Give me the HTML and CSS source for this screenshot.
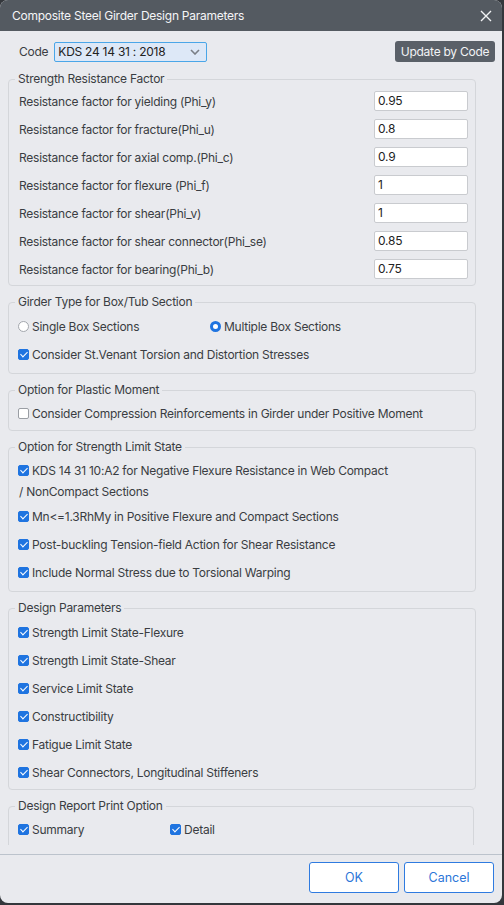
FILE: index.html
```html
<!DOCTYPE html>
<html>
<head>
<meta charset="utf-8">
<link rel="stylesheet" href="styles.css">
</head>
<body>
<div class="dialog">
  <div class="titlebar">
    <span class="title">Composite Steel Girder Design Parameters</span>
    <svg class="close" width="12" height="12" viewBox="0 0 12 12"><path d="M1 1L11 11M11 1L1 11" stroke="#f2f3f5" stroke-width="1.4" fill="none"/></svg>
  </div>
  <div class="coderow">
    <span class="codelabel">Code</span>
    <div class="select">
      <span>KDS 24 14 31 : 2018</span>
      <svg width="10" height="6" viewBox="0 0 10 6"><path d="M1 1L5 5L9 1" stroke="#7a7f86" stroke-width="1.6" fill="none"/></svg>
    </div>
    <div class="spacer"></div>
    <button class="btn-dark">Update by Code</button>
  </div>
  <div class="scroll">
    <fieldset class="group g1">
      <legend>Strength Resistance Factor</legend>
      <div class="frow"><span>Resistance factor for yielding (Phi_y)</span><div class="input">0.95</div></div>
      <div class="frow"><span>Resistance factor for fracture(Phi_u)</span><div class="input">0.8</div></div>
      <div class="frow"><span>Resistance factor for axial comp.(Phi_c)</span><div class="input">0.9</div></div>
      <div class="frow"><span>Resistance factor for flexure (Phi_f)</span><div class="input">1</div></div>
      <div class="frow"><span>Resistance factor for shear(Phi_v)</span><div class="input">1</div></div>
      <div class="frow"><span>Resistance factor for shear connector(Phi_se)</span><div class="input">0.85</div></div>
      <div class="frow"><span>Resistance factor for bearing(Phi_b)</span><div class="input">0.75</div></div>
    </fieldset>
    <fieldset class="group g2">
      <legend>Girder Type for Box/Tub Section</legend>
      <div class="row two">
        <div class="opt"><span class="radio"></span>Single Box Sections</div>
        <div class="opt opt-right"><span class="radio on"></span>Multiple Box Sections</div>
      </div>
      <div class="row"><span class="cb on"></span>Consider St.Venant Torsion and Distortion Stresses</div>
    </fieldset>
    <fieldset class="group g3">
      <legend>Option for Plastic Moment</legend>
      <div class="row"><span class="cb"></span>Consider Compression Reinforcements in Girder under Positive Moment</div>
    </fieldset>
    <fieldset class="group g4">
      <legend>Option for Strength Limit State</legend>
      <div class="row multi"><div class="line"><span class="cb on"></span>KDS 14 31 10:A2 for Negative Flexure Resistance in Web Compact</div><div class="line cont">/ NonCompact Sections</div></div>
      <div class="row"><span class="cb on"></span>Mn&lt;=1.3RhMy in Positive Flexure and Compact Sections</div>
      <div class="row"><span class="cb on"></span>Post-buckling Tension-field Action for Shear Resistance</div>
      <div class="row"><span class="cb on"></span>Include Normal Stress due to Torsional Warping</div>
    </fieldset>
    <fieldset class="group g5">
      <legend>Design Parameters</legend>
      <div class="row"><span class="cb on"></span>Strength Limit State-Flexure</div>
      <div class="row"><span class="cb on"></span>Strength Limit State-Shear</div>
      <div class="row"><span class="cb on"></span>Service Limit State</div>
      <div class="row"><span class="cb on"></span>Constructibility</div>
      <div class="row"><span class="cb on"></span>Fatigue Limit State</div>
      <div class="row"><span class="cb on"></span>Shear Connectors, Longitudinal Stiffeners</div>
    </fieldset>
    <fieldset class="group g6">
      <legend>Design Report Print Option</legend>
      <div class="row two">
        <div class="opt"><span class="cb on"></span>Summary</div>
        <div class="opt opt-detail"><span class="cb on"></span>Detail</div>
      </div>
      <div class="row"></div>
    </fieldset>
  </div>
  <div class="footer">
    <button class="btn-outline">OK</button>
    <button class="btn-outline">Cancel</button>
  </div>
</div>
</body>
</html>
```
FILE: styles.css
```css
html, body { margin: 0; padding: 0; }
body {
  background: #34373c;
  width: 504px;
  height: 905px;
  overflow: hidden;
  font-family: Inter, "Noto Sans", sans-serif;
  font-size: 12px;
  letter-spacing: -0.25px;
  color: #3a3d42;
}
.dialog {
  width: 502px;
  height: 903px;
  background: #e9eaee;
  border-radius: 8px;
  overflow: hidden;
  display: flex;
  flex-direction: column;
}
.titlebar {
  height: 31px;
  background: #545a61;
  display: flex;
  align-items: center;
  padding: 0 10px 0 12px;
  flex: none;
}
.title { color: #f4f5f7; font-size: 12px; flex: 1; }
.coderow {
  display: flex;
  align-items: center;
  padding: 10px 7px 0 19px;
  height: 21px;
  flex: none;
}
.codelabel { margin-right: 6px; color: #3a3d42; }
.select {
  height: 18px;
  border: 1px solid #4aa6e8;
  border-radius: 2px;
  background: #dde8f7;
  display: flex;
  align-items: center;
  justify-content: space-between;
  padding: 0 6px 0 3px;
  box-sizing: content-box;
  width: 142px;
  color: #222;
}
.spacer { flex: 1; }
.btn-dark {
  font-family: inherit;
  font-size: 12px;
  letter-spacing: -0.25px;
  background: #5a6068;
  color: #f2f3f5;
  border: none;
  border-radius: 3px;
  height: 21px;
  width: 100px;
  padding: 0;
}
.scroll {
  flex: none;
  height: 773px;
  margin-top: 10px;
  overflow: hidden;
  padding: 0 26px 0 8px;
}
.group {
  margin: 0 0 9px 0;
  padding: 0 7px 4px 9px;
  border: 1px solid #d4d6da;
  border-radius: 4px;
  min-width: 0;
}
.group legend {
  margin-left: -3px;
  padding: 0 3px;
  line-height: 14px;
  color: #3a3d42;
}
.g1 { padding-top: 1px; padding-bottom: 2px; }
.g2 { padding-top: 3px; padding-bottom: 5px; }
.g3 { padding-top: 2px; padding-bottom: 3px; }
.g4 { padding-top: 1px; padding-bottom: 5px; }
.g5 { padding-top: 3px; padding-bottom: 3px; }
.g6 { padding-top: 2px; margin-right: 2px; }
.frow {
  height: 28px;
  display: flex;
  align-items: center;
  justify-content: space-between;
  padding-left: 1px;
}
.input {
  width: 89px;
  height: 18px;
  line-height: 18px;
  background: #fff;
  border: 1px solid #c9cbcf;
  border-radius: 2px;
  padding-left: 3px;
  color: #222;
}
.row {
  height: 28px;
  display: flex;
  align-items: center;
}
.row.multi {
  height: auto;
  flex-direction: column;
  align-items: flex-start;
  padding: 5px 0 0;
}
.line { height: 21px; display: flex; align-items: center; }
.line.cont { padding-left: 1px; }
.opt { display: flex; align-items: center; }
.two .opt:first-child { width: 192px; }
.g6 .two .opt:first-child { width: 152px; }
.cb {
  width: 11px;
  height: 11px;
  box-sizing: border-box;
  border: 1px solid #9a9ea4;
  background: #fff;
  border-radius: 2px;
  margin-right: 3px;
  flex: none;
  position: relative;
}
.cb.on {
  background: #1f74e0;
  border-color: #1f74e0;
}
.cb.on::after {
  content: "";
  position: absolute;
  left: 3px;
  top: 0px;
  width: 3px;
  height: 6px;
  border: solid #fff;
  border-width: 0 1.6px 1.6px 0;
  transform: rotate(45deg);
}
.radio {
  width: 11px;
  height: 11px;
  box-sizing: border-box;
  border: 1px solid #a3a7ad;
  background: #fff;
  border-radius: 50%;
  margin-right: 3px;
  flex: none;
}
.radio.on {
  border: 3px solid #1f74e0;
}
.footer {
  flex: 1;
  border-top: 1px solid #bcc3cc;
  margin-top: 9px;
  display: flex;
  justify-content: flex-end;
  align-items: flex-start;
  gap: 5px;
  padding: 7px 8px 0 0;
}
.btn-outline {
  width: 90px;
  height: 31px;
  background: #fff;
  border: 1px solid #2f7be0;
  border-radius: 3px;
  color: #2c76d8;
  font-family: inherit;
  font-size: 12.5px;
  padding: 0;
}
```
